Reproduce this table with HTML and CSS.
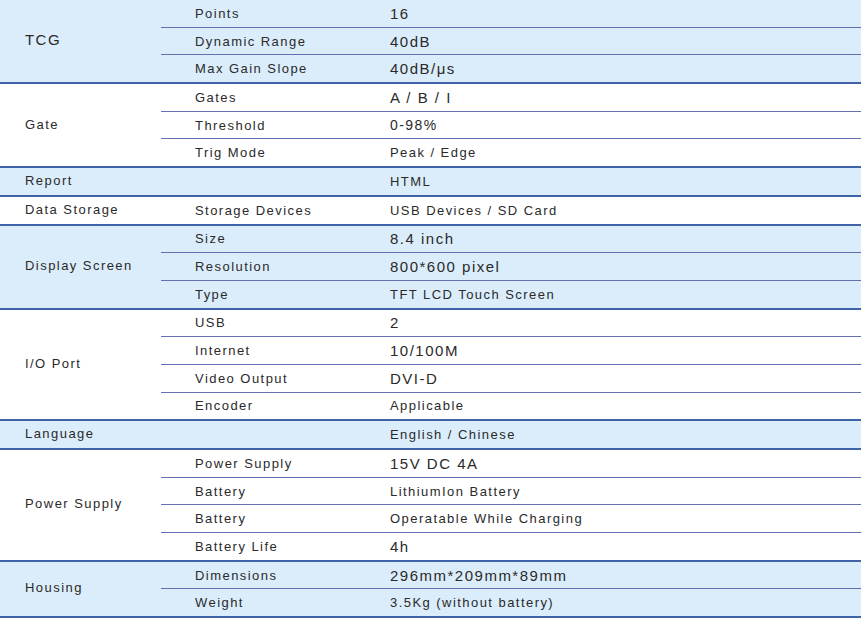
FILE: index.html
```html
<!DOCTYPE html>
<html>
<head>
<meta charset="utf-8">
<link rel="stylesheet" href="styles.css">
</head>
<body>
<div class="spec">
  <div class="group blue">
    <div class="label big">TCG</div>
    <div class="rows">
      <div class="row"><span class="key">Points</span><span class="val big">16</span></div>
      <div class="row"><span class="key">Dynamic Range</span><span class="val big">40dB</span></div>
      <div class="row"><span class="key">Max Gain Slope</span><span class="val big">40dB/μs</span></div>
    </div>
  </div>
  <div class="group">
    <div class="label">Gate</div>
    <div class="rows">
      <div class="row"><span class="key">Gates</span><span class="val big">A / B / I</span></div>
      <div class="row"><span class="key">Threshold</span><span class="val mid">0-98%</span></div>
      <div class="row"><span class="key">Trig Mode</span><span class="val">Peak / Edge</span></div>
    </div>
  </div>
  <div class="group blue">
    <div class="label">Report</div>
    <div class="rows">
      <div class="row"><span class="key"></span><span class="val">HTML</span></div>
    </div>
  </div>
  <div class="group">
    <div class="label">Data Storage</div>
    <div class="rows">
      <div class="row"><span class="key">Storage Devices</span><span class="val">USB Devices / SD Card</span></div>
    </div>
  </div>
  <div class="group blue">
    <div class="label">Display Screen</div>
    <div class="rows">
      <div class="row"><span class="key">Size</span><span class="val big">8.4 inch</span></div>
      <div class="row"><span class="key">Resolution</span><span class="val big">800*600 pixel</span></div>
      <div class="row"><span class="key">Type</span><span class="val">TFT LCD Touch Screen</span></div>
    </div>
  </div>
  <div class="group">
    <div class="label">I/O Port</div>
    <div class="rows">
      <div class="row"><span class="key">USB</span><span class="val big">2</span></div>
      <div class="row"><span class="key">Internet</span><span class="val big">10/100M</span></div>
      <div class="row"><span class="key">Video Output</span><span class="val big">DVI-D</span></div>
      <div class="row"><span class="key">Encoder</span><span class="val">Applicable</span></div>
    </div>
  </div>
  <div class="group blue">
    <div class="label">Language</div>
    <div class="rows">
      <div class="row"><span class="key"></span><span class="val">English / Chinese</span></div>
    </div>
  </div>
  <div class="group">
    <div class="label">Power Supply</div>
    <div class="rows">
      <div class="row"><span class="key">Power Supply</span><span class="val big">15V DC 4A</span></div>
      <div class="row"><span class="key">Battery</span><span class="val">LithiumIon Battery</span></div>
      <div class="row"><span class="key">Battery</span><span class="val">Operatable While Charging</span></div>
      <div class="row"><span class="key">Battery Life</span><span class="val big">4h</span></div>
    </div>
  </div>
  <div class="group blue">
    <div class="label">Housing</div>
    <div class="rows">
      <div class="row"><span class="key">Dimensions</span><span class="val big">296mm*209mm*89mm</span></div>
      <div class="row"><span class="key">Weight</span><span class="val">3.5Kg (without battery)</span></div>
    </div>
  </div>
</div>
</body>
</html>
```
FILE: styles.css
```css
html, body {
  margin: 0;
  padding: 0;
  background: #ffffff;
}
body {
  font-family: "Liberation Sans", Arial, sans-serif;
  font-size: 13px;
  letter-spacing: 1.45px;
  color: #2a2a2a;
}
.spec {
  width: 861px;
  display: flex;
  flex-direction: column;
}
.group {
  display: flex;
  border-bottom: 2px solid #3f63a8;
  background: #ffffff;
}
.group.blue {
  background: #dbedfb;
}
.label {
  width: 161px;
  flex: 0 0 161px;
  box-sizing: border-box;
  padding-left: 25px;
  padding-bottom: 2px;
  display: flex;
  align-items: center;
}
.label.big {
  font-size: 15px;
  padding-bottom: 4px;
}
.rows {
  flex: 1;
  display: flex;
  flex-direction: column;
}
.row {
  height: 26.7px;
  display: flex;
  align-items: center;
  border-bottom: 1px solid #6570b0;
}
.row:last-child {
  border-bottom: none;
}
.key {
  width: 229px;
  flex: 0 0 229px;
  box-sizing: border-box;
  padding-left: 34px;
}
.val {
  flex: 1;
}
.val.big {
  font-size: 15px;
  letter-spacing: 1.5px;
}
.val.mid {
  font-size: 14px;
}
```
